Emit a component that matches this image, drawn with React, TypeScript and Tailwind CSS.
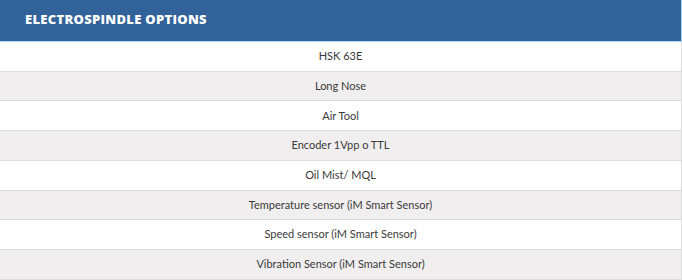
const options = [
  "HSK 63E",
  "Long Nose",
  "Air Tool",
  "Encoder 1Vpp o TTL",
  "Oil Mist/ MQL",
  "Temperature sensor (iM Smart Sensor)",
  "Speed sensor (iM Smart Sensor)",
  "Vibration Sensor (iM Smart Sensor)",
];

export default function App() {
  return (
    <div className="w-[682px] h-[280px] overflow-hidden bg-white">
      <div className="flex h-[42px] items-center bg-[#31629a] border-b border-r border-[#a9d6f5] pl-[25px] pb-[2px] font-['Open_Sans',sans-serif] text-[13px] font-extrabold tracking-[0.3px] text-white">
        ELECTROSPINDLE OPTIONS
      </div>
      {options.map((label, index) => (
        <div
          key={index}
          className={`flex h-[29.72px] items-center justify-center border-b border-r border-[#dcdcdc] font-['Lato',sans-serif] text-[11px] text-[#3a3a3a] ${index % 2 === 1 ? "bg-[#f0eeee]" : "bg-white"}`}
        >
          {label}
        </div>
      ))}
    </div>
  );
}
